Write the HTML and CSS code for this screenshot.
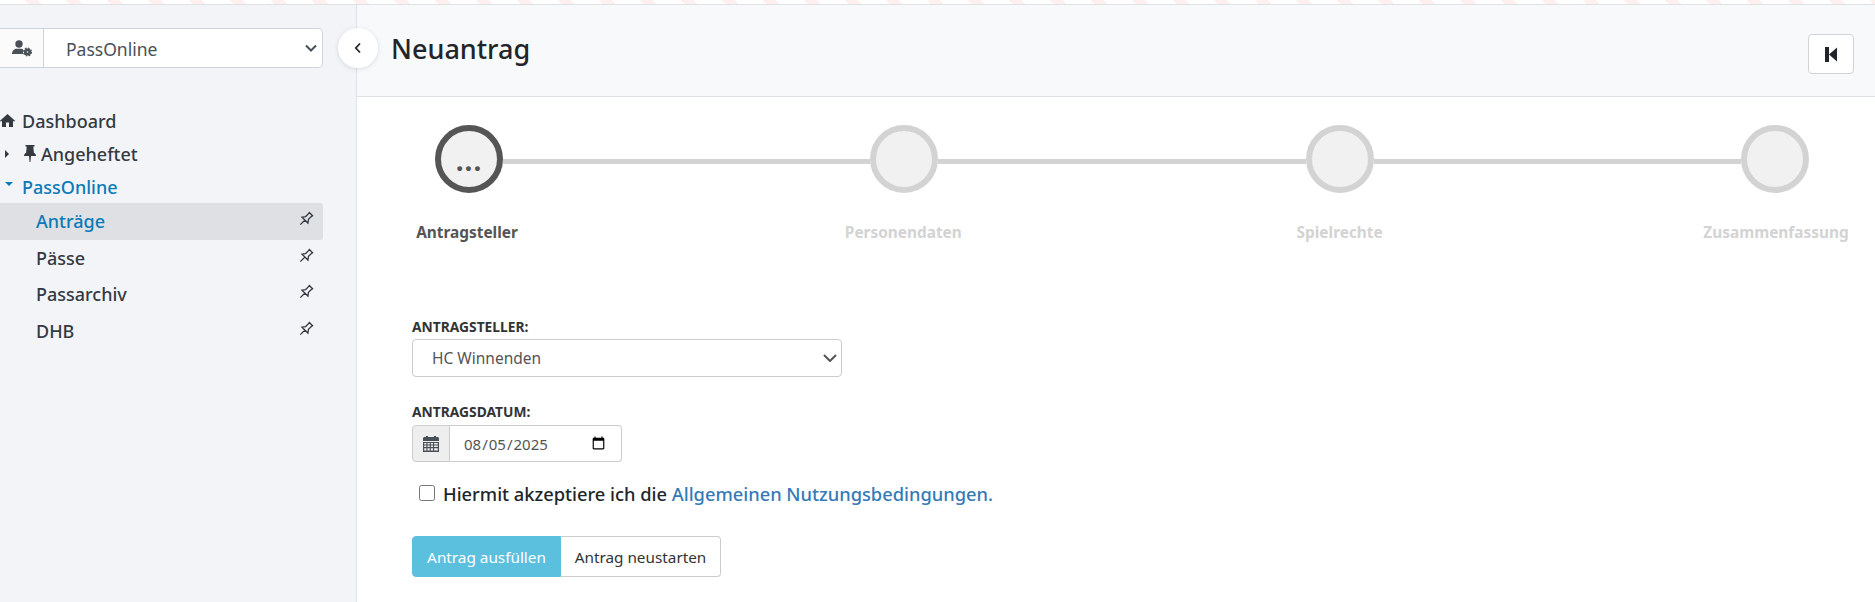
FILE: index.html
```html
<!DOCTYPE html>
<html lang="de">
<head>
<meta charset="utf-8">
<title>Neuantrag</title>
<link rel="stylesheet" href="styles.css">
</head>
<body>
<div class="topstrip"></div>
<div class="app">
  <aside class="sidebar">
    <div class="role-row">
      <div class="role-select">
        <span class="role-icon">
          <svg width="20" height="17" viewBox="0 0 20 17"><circle cx="7" cy="4" r="3.700" fill="#495057"/><path d="M0 14c0-3.400 2.500-5.200 5-5.200h4c1 0 1.600.3 2 .6V14z" fill="#495057"/><circle cx="15.500" cy="12" r="2.200" fill="none" stroke="#495057" stroke-width="2.800"/><circle cx="15.500" cy="12" r="3.900" fill="none" stroke="#495057" stroke-width="1.300" stroke-dasharray="1.700 1.360"/></svg>
        </span>
        <select class="role-input"><option>PassOnline</option></select>
      </div>
      <button class="collapse" aria-label="Einklappen">
        <svg width="8" height="12" viewBox="0 0 8 12"><path d="M6 1.500 1.800 6 6 10.500" fill="none" stroke="#212529" stroke-width="1.800"/></svg>
      </button>
    </div>
    <nav class="nav">
      <a class="nav-top">
        <svg class="home" width="15" height="13" viewBox="0 0 15 13"><path d="M7.500 0 0 6.700l.9 1L2 6.800V13h4V8.500h3V13h4V6.800l1.100.9.900-1z" fill="#343a40"/></svg>Dashboard
      </a>
      <a class="nav-top nav-pinned">
        <span class="caret-right"></span>
        <svg class="pin-solid" width="12" height="17" viewBox="0 0 12 17"><path d="M1.500 0h9v1.500H9.300l.6 6.300c1.200.6 2.100 1.700 2.100 3.200H7l-.6 6h-.8L5 11H0c0-1.500.9-2.600 2.100-3.200l.6-6.300H1.500z" fill="#343a40"/></svg>Angeheftet
      </a>
      <a class="nav-top nav-active">
        <span class="caret-down"></span>PassOnline
      </a>
      <a class="nav-item nav-item-active">Anträge
        <svg class="pin" width="16" height="16" viewBox="0 0 16 16"><g transform="rotate(45 8 8)"><path d="M5 1h6M6 1v5.500L3.800 9.500h8.400L10 6.500V1M8 9.500V16" fill="none" stroke="#343a40" stroke-width="1.300"/></g></svg>
      </a>
      <a class="nav-item">Pässe
        <svg class="pin" width="16" height="16" viewBox="0 0 16 16"><g transform="rotate(45 8 8)"><path d="M5 1h6M6 1v5.500L3.800 9.500h8.400L10 6.500V1M8 9.500V16" fill="none" stroke="#343a40" stroke-width="1.300"/></g></svg>
      </a>
      <a class="nav-item">Passarchiv
        <svg class="pin" width="16" height="16" viewBox="0 0 16 16"><g transform="rotate(45 8 8)"><path d="M5 1h6M6 1v5.500L3.800 9.500h8.400L10 6.500V1M8 9.500V16" fill="none" stroke="#343a40" stroke-width="1.300"/></g></svg>
      </a>
      <a class="nav-item">DHB
        <svg class="pin" width="16" height="16" viewBox="0 0 16 16"><g transform="rotate(45 8 8)"><path d="M5 1h6M6 1v5.500L3.800 9.500h8.400L10 6.500V1M8 9.500V16" fill="none" stroke="#343a40" stroke-width="1.300"/></g></svg>
      </a>
    </nav>
  </aside>
  <main class="main">
    <header class="page-head">
      <h1 class="title">Neuantrag</h1>
      <button class="head-btn" aria-label="Zum Anfang">
        <svg width="12" height="15" viewBox="0 0 12 15"><path d="M0 0h4v15H0zM4 7.500 12 .5v14z" fill="#212529"/></svg>
      </button>
    </header>
    <section class="stepper">
      <div class="track">
        <span class="dot dot-current">...</span>
        <span class="line"></span>
        <span class="dot"></span>
        <span class="line"></span>
        <span class="dot"></span>
        <span class="line"></span>
        <span class="dot"></span>
      </div>
      <div class="labels">
        <span class="label label-current">Antragsteller</span>
        <span class="label">Personendaten</span>
        <span class="label">Spielrechte</span>
        <span class="label">Zusammenfassung</span>
      </div>
    </section>
    <form class="form">
      <label class="field-label">ANTRAGSTELLER:</label>
      <select class="control select-wide"><option>HC Winnenden</option></select>
      <label class="field-label field-second">ANTRAGSDATUM:</label>
      <div class="date-group">
        <span class="addon">
          <svg width="16" height="16" viewBox="0 0 16 16"><path d="M0 2.500C0 1.700.7 1 1.500 1H3V0h2v1h6V0h2v1h1.500c.8 0 1.500.7 1.500 1.500V5H0z" fill="#495057"/><path fill-rule="evenodd" d="M0 6h16v10H0zm1.200 1v1.500h2.200V7zm3.300 0v1.500h2.200V7zm3.300 0v1.500H10V7zm3.300 0v1.500h3.700V7zM1.200 9.600v1.500h2.200V9.600zm3.300 0v1.500h2.200V9.600zm3.300 0v1.500H10V9.600zm3.300 0v1.500h3.700V9.600zM1.200 12.200v2.300h2.200v-2.300zm3.300 0v2.300h2.200v-2.300zm3.300 0v2.300H10v-2.300zm3.300 0v2.300h3.700v-2.300z" fill="#495057"/></svg>
        </span>
        <input class="date-input" type="date" value="2025-08-05">
      </div>
      <label class="accept">
        <input class="check" type="checkbox">
        <span>Hiermit akzeptiere ich die <a class="terms">Allgemeinen Nutzungsbedingungen.</a></span>
      </label>
      <div class="btn-group">
        <button type="button" class="btn btn-info">Antrag ausfüllen</button>
        <button type="button" class="btn btn-plain">Antrag neustarten</button>
      </div>
    </form>
  </main>
</div>
</body>
</html>
```
FILE: styles.css
```css
* { box-sizing: border-box; }
html, body { margin: 0; height: 100%; }
body {
  width: 1875px;
  height: 602px;
  overflow: hidden;
  background: #fff;
  color: #212529;
  font-family: "Noto Sans", "Open Sans", sans-serif;
  font-size: 16px;
}
.topstrip {
  height: 5px;
  border-bottom: 1px solid #dee2e6;
  background: repeating-linear-gradient(45deg, #fff 0 20px, #fdf0ef 20px 29px);
}
.app { display: flex; height: 597px; }

.sidebar {
  width: 357px;
  flex: none;
  background: #f3f4f8;
  border-right: 1px solid #dee2e6;
  padding-top: 23px;
}
.role-row { display: flex; align-items: flex-start; }
.role-select {
  width: 323px;
  height: 40px;
  flex: none;
  display: flex;
  background: #fff;
  border: 1px solid #ced4da;
  border-left: 0;
  border-radius: 0 5px 5px 0;
}
.role-icon {
  width: 44px;
  flex: none;
  display: flex;
  align-items: center;
  justify-content: center;
  padding-left: 1px;
  background: #fbfbfb;
  border-right: 1px solid #ced4da;
}
.role-input {
  flex: 1;
  min-width: 0;
  appearance: none;
  border: 0;
  color: #495057;
  font: 400 17.500px "Noto Sans", sans-serif;
  padding: 1px 0 0 22px;
  outline: 0;
  border-radius: 0 5px 5px 0;
  background: #fff url("data:image/svg+xml,%3Csvg xmlns='http://www.w3.org/2000/svg' width='12' height='8' viewBox='0 0 12 8'%3E%3Cpath d='M1 1.500l5 5 5-5' fill='none' stroke='%23495057' stroke-width='2'/%3E%3C/svg%3E") no-repeat right 5px center;
}
.collapse {
  width: 40px;
  height: 40px;
  flex: none;
  margin: 0 0 0 15px;
  padding: 0;
  border: 0;
  border-radius: 50%;
  background: #fff;
  box-shadow: 0 1px 5px rgba(0,0,0,.12);
  display: flex;
  align-items: center;
  justify-content: center;
  position: relative;
  z-index: 2;
}

.nav { margin-top: 36px; display: flex; flex-direction: column; padding-right: 33px; }
.nav-top {
  height: 33px;
  display: flex;
  align-items: center;
  font-weight: 500;
  font-size: 18px;
  color: #343a40;
  white-space: nowrap;
}
.home { margin-right: 7px; }
.nav-pinned { padding-left: 5px; }
.pin-solid { margin: 0 5px 0 15px; }
.caret-right {
  width: 0; height: 0;
  border-left: 4px solid #343a40;
  border-top: 4px solid transparent;
  border-bottom: 4px solid transparent;
}
.caret-down {
  width: 0; height: 0;
  margin: -6px 9px 0 5px;
  border-top: 4px solid #0a7ab8;
  border-left: 4px solid transparent;
  border-right: 4px solid transparent;
}
.nav-active { color: #0a7ab8; }
.nav-item {
  height: 36.500px;
  display: flex;
  align-items: center;
  justify-content: space-between;
  padding: 0 9px 0 36px;
  font-weight: 500;
  font-size: 18px;
  color: #343a40;
  border-radius: 0 3px 3px 0;
}
.nav-item-active { background: #dee0e4; color: #0a7ab8; }
.pin { margin-top: -4px; }

.main { flex: 1; display: flex; flex-direction: column; min-width: 0; }
.page-head {
  height: 92px;
  flex: none;
  background: #f8f9fa;
  border-bottom: 1px solid #dee2e6;
  display: flex;
  align-items: flex-start;
  justify-content: space-between;
  padding: 29px 21px 0 34px;
}
.title {
  margin: -4px 0 0;
  font-size: 27px;
  line-height: 38px;
  font-weight: 500;
}
.head-btn {
  width: 46px;
  height: 40px;
  padding: 0;
  background: #fff;
  border: 1px solid #ced4da;
  border-radius: 4px;
  display: flex;
  align-items: center;
  justify-content: center;
}

.stepper { padding: 28px 19px 0 31px; }
.track { display: flex; align-items: center; padding: 0 47px 0 47px; }
.dot {
  width: 68px;
  height: 68px;
  flex: none;
  border-radius: 50%;
  background: #f1f1f1;
  border: 6px solid #d3d3d3;
  display: flex;
  align-items: center;
  justify-content: center;
  font-size: 28px;
  font-weight: 700;
  letter-spacing: 1px;
  color: #555;
  line-height: 1;
}
.dot-current { border-color: #555; padding-top: 1px; }
.line { flex: 1; height: 5px; background: #d3d3d3; margin-top: 5px; }
.labels { display: flex; justify-content: space-between; margin: 28px 3px 0 2px; }
.label {
  width: 154px;
  text-align: center;
  font-size: 15.400px;
  line-height: 24px;
  font-weight: 700;
  color: #d3d3d3;
  white-space: nowrap;
}
.label-current { color: #555; }

.form { padding: 73px 0 0 55px; display: flex; flex-direction: column; align-items: flex-start; }
.field-label {
  font-size: 13.800px;
  line-height: 18px;
  font-weight: 700;
  color: #333;
  margin-bottom: 3px;
}
.field-second { margin-top: 26px; margin-bottom: 4px; }
.control {
  height: 38px;
  border: 1px solid #ccc;
  border-radius: 4px;
  color: #555;
  font: 400 15.500px "Noto Sans", sans-serif;
  padding-left: 19px;
  appearance: none;
  background: #fff url("data:image/svg+xml,%3Csvg xmlns='http://www.w3.org/2000/svg' width='14' height='8' viewBox='0 0 14 8'%3E%3Cpath d='M1 1l6 6 6-6' fill='none' stroke='%23555' stroke-width='2'/%3E%3C/svg%3E") no-repeat right 4px center;
}
.select-wide { width: 430px; }
.date-group { display: flex; height: 37px; width: 210px; }
.addon {
  width: 38px;
  flex: none;
  display: flex;
  align-items: center;
  justify-content: center;
  background: #eee;
  border: 1px solid #ccc;
  border-radius: 4px 0 0 4px;
}
.date-input {
  flex: 1;
  min-width: 0;
  border: 1px solid #ccc;
  border-left: 0;
  border-radius: 0 4px 4px 0;
  background: #fff;
  color: #555;
  font: 400 15px "Noto Sans", sans-serif;
  padding: 0 13px 0 13px;
}
.accept {
  display: flex;
  align-items: center;
  margin: 20px 0 0 7px;
  font-size: 18.300px;
  line-height: 24px;
  font-weight: 500;
  color: #212529;
}
.check { width: 16px; height: 16px; margin: 0 8px 2px 0; }
.terms { color: #337ab7; }
.btn-group { display: flex; margin-top: 30px; }
.btn {
  height: 41px;
  font: 400 15.300px "Noto Sans", sans-serif;
  border: 1px solid #ccc;
  background: #fff;
  color: #333;
  padding: 0;
}
.btn-info {
  width: 149px;
  background: #5bc0de;
  border-color: #5bc0de;
  color: #fff;
  border-radius: 4px 0 0 4px;
}
.btn-plain {
  width: 160px;
  border-left: 0;
  border-radius: 0 4px 4px 0;
}
```
